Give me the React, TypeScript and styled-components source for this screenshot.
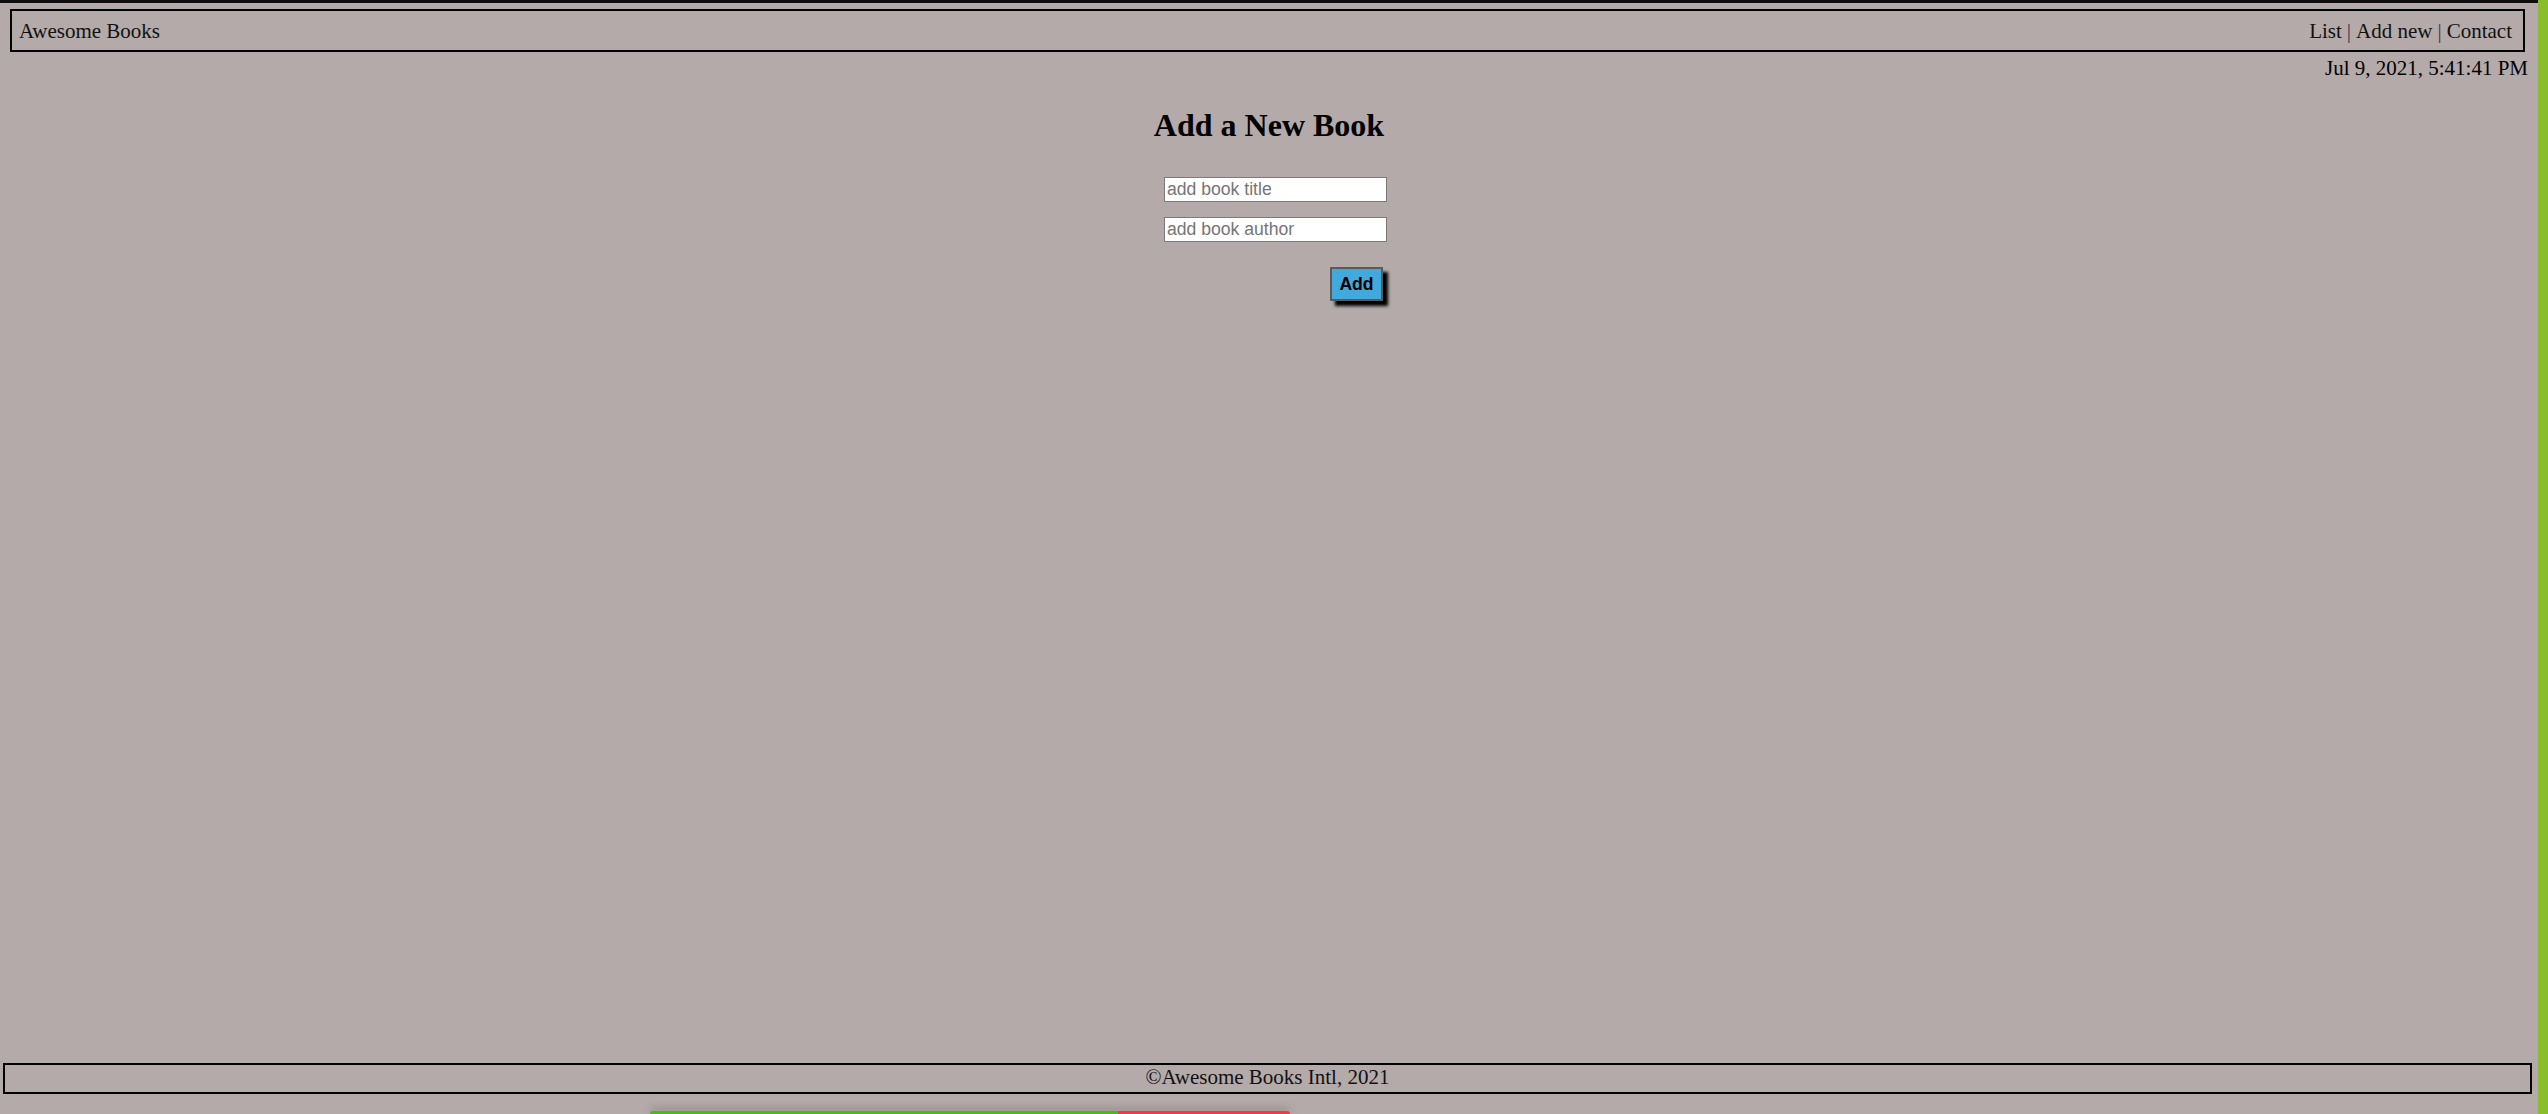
import React from "react";
import styled, { createGlobalStyle } from "styled-components";

const GlobalStyle = createGlobalStyle`
  html, body {
    margin: 0;
    padding: 0;
    background: #b4aaa9;
  }
  body {
    font-family: "Liberation Serif", "Times New Roman", serif;
    color: #000;
  }
  * { box-sizing: border-box; }
`;

const Shell = styled.div`
  display: flex;
  min-height: 100vh;
`;

const Page = styled.div`
  flex: 1;
  display: flex;
  flex-direction: column;
  min-height: 100vh;
  border-top: 3px solid #0e0e0e;
  background: #b4aaa9;
`;

const SideStrip = styled.div`
  width: 10px;
  background: #8abd2b;
`;

const Header = styled.header`
  display: flex;
  justify-content: space-between;
  align-items: baseline;
  margin: 6px 13px 0 10px;
  border: 2px solid #000;
  padding: 8px 11px 7px 7px;
  font-size: 21px;
  line-height: 24px;
`;

const Brand = styled.span`
  color: #111;
`;

const Nav = styled.nav`
  display: flex;
`;

const NavLink = styled.span`
  color: #111;
  cursor: pointer;
`;

const Pipe = styled.span`
  color: #3a3550;
  padding: 0 5px;
`;

const DateLine = styled.div`
  margin: 4px 10px 0 0;
  text-align: right;
  font-size: 21px;
  line-height: 24px;
`;

const Main = styled.main`
  flex: 1;
  display: flex;
  flex-direction: column;
  align-items: center;
`;

const Heading = styled.h2`
  margin: 26px 0 0;
  font-size: 32px;
  line-height: 39px;
  font-weight: bold;
`;

const Form = styled.form`
  display: flex;
  flex-direction: column;
  align-items: flex-end;
  gap: 15px;
  margin-top: 32px;
  padding-left: 13px;
`;

const Input = styled.input`
  width: 223px;
  height: 25px;
  border: 1px solid #7a7a7a;
  background: #fff;
  padding: 0 2px;
  font-family: "Liberation Sans", Arial, sans-serif;
  font-size: 17.6px;
  color: #000;
  outline: none;
  &::placeholder {
    color: #757575;
  }
`;

const AddButton = styled.button`
  margin-top: 10px;
  margin-right: 4px;
  width: 53px;
  height: 34px;
  padding: 0;
  background: #41a9dc;
  border: 2px solid #5a5a5a;
  box-shadow: 5px 5px 3px #000;
  font-family: "Liberation Sans", Arial, sans-serif;
  font-weight: bold;
  font-size: 17.6px;
  color: #000;
  cursor: pointer;
`;

const Footer = styled.footer`
  margin: 0 6px 20px 3px;
  border: 2px solid #000;
  padding: 0 0 3px;
  text-align: center;
  font-size: 21px;
  line-height: 24px;
  color: #111;
`;

const ProgressOverlay = styled.div`
  position: fixed;
  left: 650px;
  bottom: 0;
  width: 640px;
  height: 3px;
  border-radius: 3px 3px 0 0;
  background: linear-gradient(to right, #4cb918 0 73.1%, #ef3b47 73.1% 100%);
  box-shadow: 0 -2px 8px rgba(0, 0, 0, 0.35);
`;

export default function App() {
  return (
    <>
      <GlobalStyle />
      <Shell>
        <Page>
          <Header>
            <Brand>Awesome Books</Brand>
            <Nav>
              <NavLink>List</NavLink>
              <Pipe>|</Pipe>
              <NavLink>Add new</NavLink>
              <Pipe>|</Pipe>
              <NavLink>Contact</NavLink>
            </Nav>
          </Header>
          <DateLine>Jul 9, 2021, 5:41:41 PM</DateLine>
          <Main>
            <Heading>Add a New Book</Heading>
            <Form onSubmit={(e) => e.preventDefault()}>
              <Input type="text" placeholder="add book title" />
              <Input type="text" placeholder="add book author" />
              <AddButton type="submit">Add</AddButton>
            </Form>
          </Main>
          <Footer>©Awesome Books Intl, 2021</Footer>
        </Page>
        <SideStrip />
      </Shell>
      <ProgressOverlay />
    </>
  );
}
